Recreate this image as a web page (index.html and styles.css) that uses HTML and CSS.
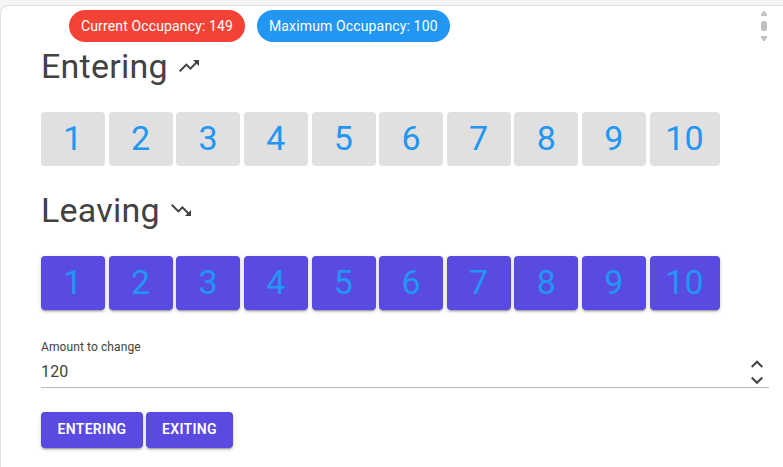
FILE: index.html
```html
<!DOCTYPE html>
<html lang="en">
<head>
<meta charset="utf-8">
<title>Occupancy</title>
<link rel="stylesheet" href="styles.css">
</head>
<body>
<main class="panel">
  <div class="scrollbar"><svg width="8" height="32" viewBox="0 0 8 32" fill="#c1c1c1"><path d="M3.200 1h1.600L7 4.500V6H1V4.500zM3.200 31h1.600L7 27.500V26H1v1.500z"/><rect x="1" y="11" width="6" height="10" rx="2.500"/></svg></div>
  <div class="chips"><span class="chip red">Current Occupancy: 149</span><span class="chip blue">Maximum Occupancy: 100</span></div>
  <h1 class="title">Entering <svg class="trend" viewBox="0 0 24 24"><path d="M16 6l2.29 2.29-4.88 4.88-4-4L2 16.59 3.41 18l6-6 4 4 6.3-6.29L22 12V6z"/></svg></h1>
  <div class="numbers light"><button>1</button><button>2</button><button>3</button><button>4</button><button>5</button><button>6</button><button>7</button><button>8</button><button>9</button><button>10</button></div>
  <h1 class="title">Leaving <svg class="trend" viewBox="0 0 24 24"><path d="M16 18l2.29-2.29-4.88-4.88-4 4L2 7.41 3.41 6l6 6 4-4 6.3 6.29L22 12v6z"/></svg></h1>
  <div class="numbers solid"><button>1</button><button>2</button><button>3</button><button>4</button><button>5</button><button>6</button><button>7</button><button>8</button><button>9</button><button>10</button></div>
  <label class="field"><span class="label">Amount to change</span>
    <span class="row"><input class="amount" type="text" value="120"><svg class="spin" viewBox="0 0 24 32"><path d="M6.700 10L12 4.700l5.300 5.300M6.700 20.500L12 25.800l5.300-5.300"/></svg></span></label>
  <div class="actions"><button>ENTERING</button><button>EXITING</button></div>
</main>
</body>
</html>
```
FILE: styles.css
```css
* { box-sizing: border-box; }
body { display: flow-root; margin: 0; height: 467px; overflow: hidden; background: #f5f5f5; font-family: Roboto, sans-serif; color: #424242; }
button { border: 0; padding: 0; font-family: inherit; border-radius: 4px; }
.panel { position: relative; height: 462px; margin-top: 5px; padding: 5px 14px 0 40px; background: #fff; border: 1px solid #e0e0e0; border-width: 1px 0 0 1px; border-radius: 8px 0 0 0; }
.scrollbar { position: absolute; right: 15px; top: 4px; }
.chips { display: flex; gap: 12px; height: 32px; margin: -1px 0 0 28px; }
.chip { height: 32px; padding: 0 12px; border-radius: 16px; color: #fff; font-size: 14px; line-height: 32px; letter-spacing: .14px; white-space: nowrap; }
.red { background: #f44336; width: 176px; }
.blue { background: #2196f3; width: 193px; }
.title { display: flex; align-items: center; gap: 9px; height: 40px; margin: 4px 0 26px; font-size: 34px; font-weight: 400; line-height: 40px; letter-spacing: .25px; }
.trend { width: 24px; height: 24px; fill: currentColor; }
.numbers { display: flex; gap: 3.63px; height: 54px; margin-bottom: 24px; }
.numbers button { width: 64px; height: 54px; padding-bottom: 2px; color: #2196f3; font-size: 34px; line-height: 52px; letter-spacing: .25px; }
.numbers button:last-child { width: 70px; }
.light button { background: #e0e0e0; }
.solid button, .actions button { background: #594ae2; box-shadow: 0 3px 1px -2px rgba(0,0,0,.2), 0 2px 2px rgba(0,0,0,.14), 0 1px 5px rgba(0,0,0,.12); }
.field { display: block; height: 54px; margin-top: 24px; }
.label { display: block; height: 24px; font-size: 12px; line-height: 26px; letter-spacing: .1px; }
.row { display: flex; align-items: center; height: 30px; border-bottom: 1px solid #b8b8b8; }
.amount { flex: 1; min-width: 0; border: 0; padding: 0 0 2px; color: #424242; background: none; font: 16px Roboto, sans-serif; letter-spacing: .15px; outline: 0; }
.spin { width: 24px; height: 32px; fill: none; stroke: #424242; stroke-width: 2; }
.actions { display: flex; gap: 3px; margin-top: 24px; }
.actions button { width: 102px; height: 36px; padding-bottom: 2px; color: #fff; font-size: 14px; font-weight: 600; letter-spacing: .3px; }
.actions button:last-child { width: 87px; }
```
